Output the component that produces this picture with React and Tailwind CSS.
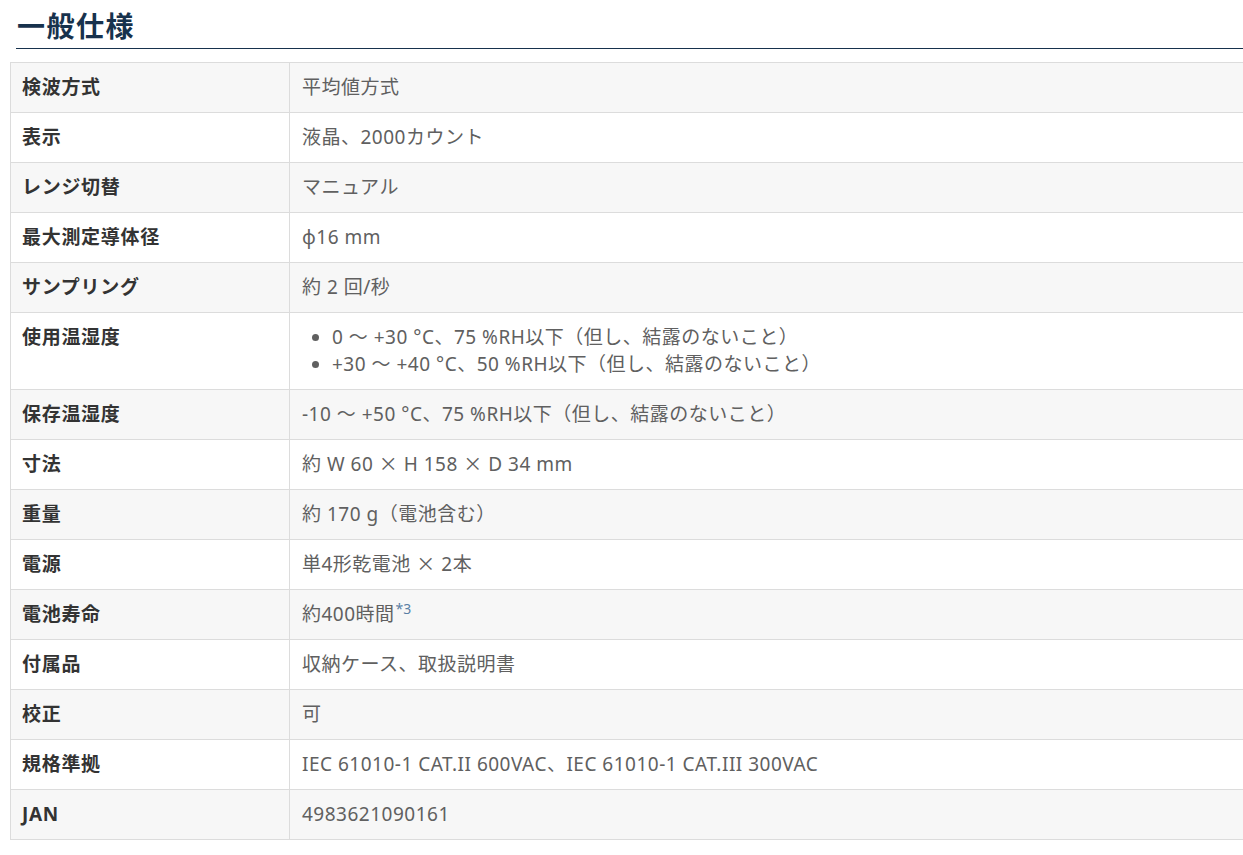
const specs = [
  { label: "検波方式", value: "平均値方式" },
  { label: "表示", value: "液晶、2000カウント" },
  { label: "レンジ切替", value: "マニュアル" },
  { label: "最大測定導体径", value: "ϕ16 mm" },
  { label: "サンプリング", value: "約 2 回/秒" },
  {
    label: "使用温湿度",
    list: [
      "0 ～ +30 °C、75 %RH以下（但し、結露のないこと）",
      "+30 ～ +40 °C、50 %RH以下（但し、結露のないこと）",
    ],
  },
  { label: "保存温湿度", value: "-10 ～ +50 °C、75 %RH以下（但し、結露のないこと）" },
  { label: "寸法", value: "約 W 60 × H 158 × D 34 mm" },
  { label: "重量", value: "約 170 g（電池含む）" },
  { label: "電源", value: "単4形乾電池 × 2本" },
  { label: "電池寿命", value: "約400時間", note: "*3" },
  { label: "付属品", value: "収納ケース、取扱説明書" },
  { label: "校正", value: "可" },
  { label: "規格準拠", value: "IEC 61010-1 CAT.II 600VAC、IEC 61010-1 CAT.III 300VAC" },
  { label: "JAN", value: "4983621090161" },
];

const cjk = { fontFamily: '"Noto Sans CJK JP", sans-serif' };

// the multiplication sign is full width in the original
function Value({ text }) {
  const parts = text.split("×");
  return parts.map((p, i) => (
    <span key={i}>
      {p}
      {i < parts.length - 1 && (
        <span className="leading-[0]" style={cjk}>
          ×
        </span>
      )}
    </span>
  ));
}

export default function App() {
  return (
    <div
      className="min-h-[855px] bg-white overflow-hidden"
      style={{ fontFamily: '"Noto Sans", "Noto Sans CJK JP", sans-serif' }}
    >
      {/* Heading */}
      <div className="pt-[4px] pl-[16px]">
        <h2
          className="border-b border-[#17324d] pl-[1px] pb-[2px] text-[28px] leading-[42px] font-bold tracking-[1.5px] text-[#17324d]"
          style={cjk}
        >
          一般仕様
        </h2>
      </div>

      {/* Spec table */}
      <div className="ml-[10px] mt-[13px] border-t border-[#dcdcdc]">
        {specs.map((row, i) => (
          <div
            key={row.label}
            className={`grid grid-cols-[280px_1fr] border-b border-[#dcdcdc] ${
              i % 2 === 0 ? "bg-[#f7f7f7]" : "bg-white"
            }`}
          >
            <div className="border-l border-r border-[#dcdcdc] px-[11px] py-[11px] text-[19px] leading-[27px] font-bold tracking-[0.7px] text-[#333]">
              {row.label}
            </div>
            <div className="px-[12px] py-[11px] text-[19px] leading-[27px] tracking-[0.5px] text-[#606060]">
              {row.list ? (
                <ul className="list-disc pl-[30px]">
                  {row.list.map((item) => (
                    <li key={item}>{item}</li>
                  ))}
                </ul>
              ) : (
                <span>
                  <Value text={row.value} />
                  {row.note && (
                    <sup className="ml-[1px] text-[14px] tracking-normal text-[#5a7fa5]">{row.note}</sup>
                  )}
                </span>
              )}
            </div>
          </div>
        ))}
      </div>
    </div>
  );
}
